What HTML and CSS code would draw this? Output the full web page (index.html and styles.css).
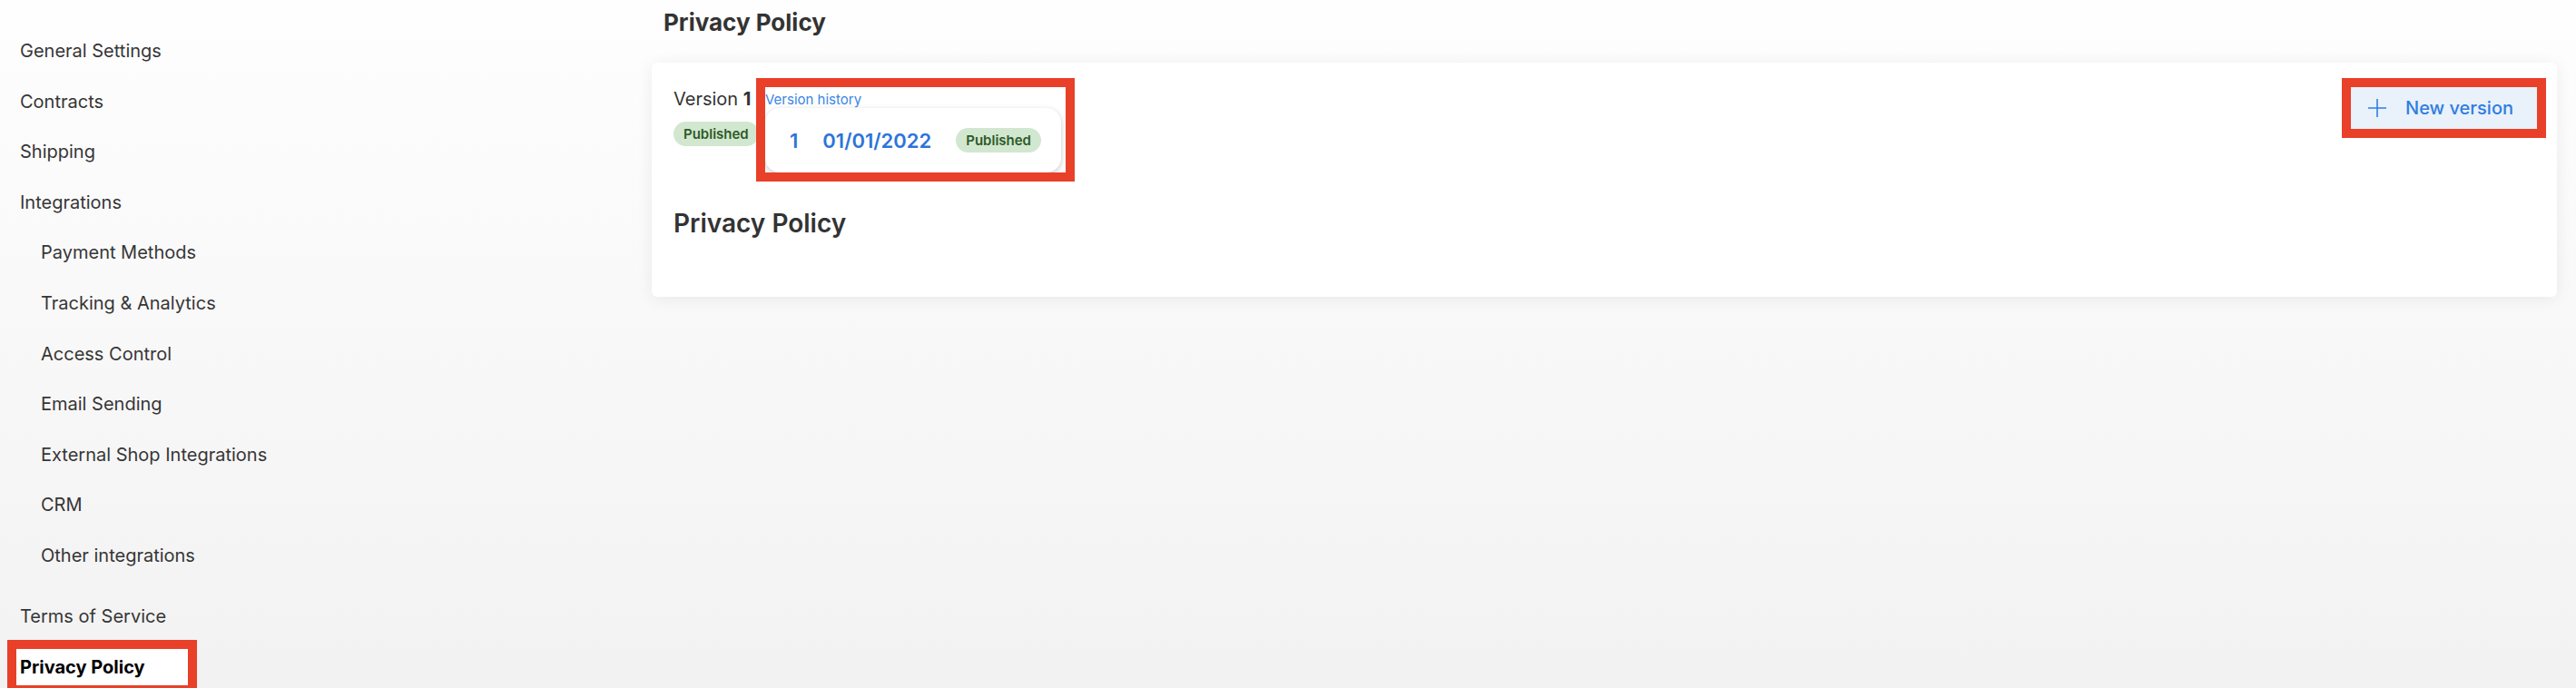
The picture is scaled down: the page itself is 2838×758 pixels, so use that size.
FILE: index.html
```html
<!DOCTYPE html>
<html lang="en">
<head>
    <meta charset="UTF-8">
    <meta name="viewport" content="width=device-width, initial-scale=1.0">
    <title>Privacy Policy - Settings</title>
    <link rel="stylesheet" href="styles.css">
</head>
<body>
    <div class="layout">
        <nav class="sidebar">
            <a class="nav-item" href="#">General Settings</a>
            <a class="nav-item" href="#">Contracts</a>
            <a class="nav-item" href="#">Shipping</a>
            <a class="nav-item" href="#">Integrations</a>
            <div class="nav-sub">
                <a class="nav-item" href="#">Payment Methods</a>
                <a class="nav-item" href="#">Tracking &amp; Analytics</a>
                <a class="nav-item" href="#">Access Control</a>
                <a class="nav-item" href="#">Email Sending</a>
                <a class="nav-item" href="#">External Shop Integrations</a>
                <a class="nav-item" href="#">CRM</a>
                <a class="nav-item" href="#">Other integrations</a>
            </div>
            <a class="nav-item" href="#">Terms of Service</a>
            <a class="nav-item active" href="#">Privacy Policy</a>
        </nav>

        <main class="content">
            <h1 class="page-title">Privacy Policy</h1>
            <section class="card">
                <div class="card-top">
                    <div class="version-info">
                        <div class="version-label">Version <b>1</b></div>
                        <span class="badge">Published</span>
                    </div>
                    <div class="history">
                        <div class="history-label">Version history</div>
                        <div class="history-popover">
                            <span class="history-num">1</span>
                            <span class="history-date">01/01/2022</span>
                            <span class="badge">Published</span>
                        </div>
                    </div>
                    <button class="btn-new">
                        <svg width="20" height="20" viewBox="0 0 20 20">
                            <path d="M10 0V20M0 10H20" stroke="currentColor" stroke-width="1.6" fill="none"/>
                        </svg>
                        New version
                    </button>
                </div>
                <h2 class="doc-title">Privacy Policy</h2>
            </section>
        </main>
    </div>
</body>
</html>
```

FILE: styles.css
```css
body {
    margin: 0;
    font-family: 'Inter', 'Liberation Sans', sans-serif;
    background: linear-gradient(#fefefe, #f2f2f2);
    min-height: 100vh;
    color: #333;
}

.layout {
    display: flex;
    min-height: 100vh;
}

/* sidebar */

.sidebar {
    width: 718px;
    flex-shrink: 0;
    padding: 36px 0 0 18px;
    box-sizing: border-box;
    display: flex;
    flex-direction: column;
    align-items: flex-start;
    gap: 15.6px;
}

.nav-sub {
    display: flex;
    flex-direction: column;
    align-items: flex-start;
    gap: 15.6px;
    padding-left: 23px;
    margin-bottom: 11.4px;
}

.nav-item {
    display: block;
    height: 40px;
    line-height: 40px;
    padding: 0 4px;
    font-size: 20px;
    color: #363636;
    text-decoration: none;
}

.nav-item.active {
    width: 189px;
    box-sizing: border-box;
    background: #fff;
    color: #000;
    font-weight: 700;
    outline: 10px solid #e9402a;
}

/* main */

.content {
    flex: 1;
    min-width: 0;
    padding: 9px 21px 0 0;
}

.page-title {
    margin: 0 0 28px;
    padding-left: 13px;
    font-size: 26px;
    line-height: 32px;
    font-weight: 700;
    color: #333;
}

.card {
    background: #fff;
    border-radius: 6px;
    padding: 27px 22px 63px 24px;
    box-shadow: 0 2px 18px rgba(0, 0, 0, 0.07);
}

.card-top {
    display: flex;
    align-items: flex-start;
}

.version-info {
    width: 92px;
    margin-right: 9px;
}

.version-label {
    font-size: 20px;
    line-height: 26px;
    color: #333;
    white-space: nowrap;
}

.version-label b {
    font-weight: 700;
}

.version-info .badge {
    margin-top: 12px;
}

.badge {
    display: inline-flex;
    align-items: center;
    height: 27px;
    padding: 0 11px;
    border-radius: 14px;
    background: #d2e7cf;
    color: #2c5a27;
    font-size: 15px;
    font-weight: 600;
    white-space: nowrap;
}

.history {
    width: 331px;
    height: 94px;
    outline: 10px solid #e9402a;
    background: #fff;
}

.history-label {
    padding-top: 5px;
    line-height: 18px;
    font-size: 15px;
    color: #3a86e6;
}

.history-popover {
    display: flex;
    align-items: center;
    width: 326px;
    height: 71px;
    box-sizing: border-box;
    padding: 0 26px 0 27px;
    gap: 27px;
    border-radius: 16px;
    background: #fff;
    box-shadow: 0 2px 6px rgba(0, 0, 0, 0.22);
}

.history-num,
.history-date {
    font-size: 22px;
    font-weight: 600;
    color: #2d74da;
}

.btn-new {
    margin-left: auto;
    display: flex;
    align-items: center;
    gap: 21px;
    height: 46px;
    padding: 0 26px 0 19px;
    border: none;
    background: #e9f1fb;
    color: #2f7de1;
    font-family: inherit;
    font-size: 20px;
    font-weight: 500;
    outline: 10px solid #e9402a;
    cursor: pointer;
}

.doc-title {
    margin: 38px 0 0;
    font-size: 28px;
    line-height: 36px;
    font-weight: 600;
    color: #333;
}
```
